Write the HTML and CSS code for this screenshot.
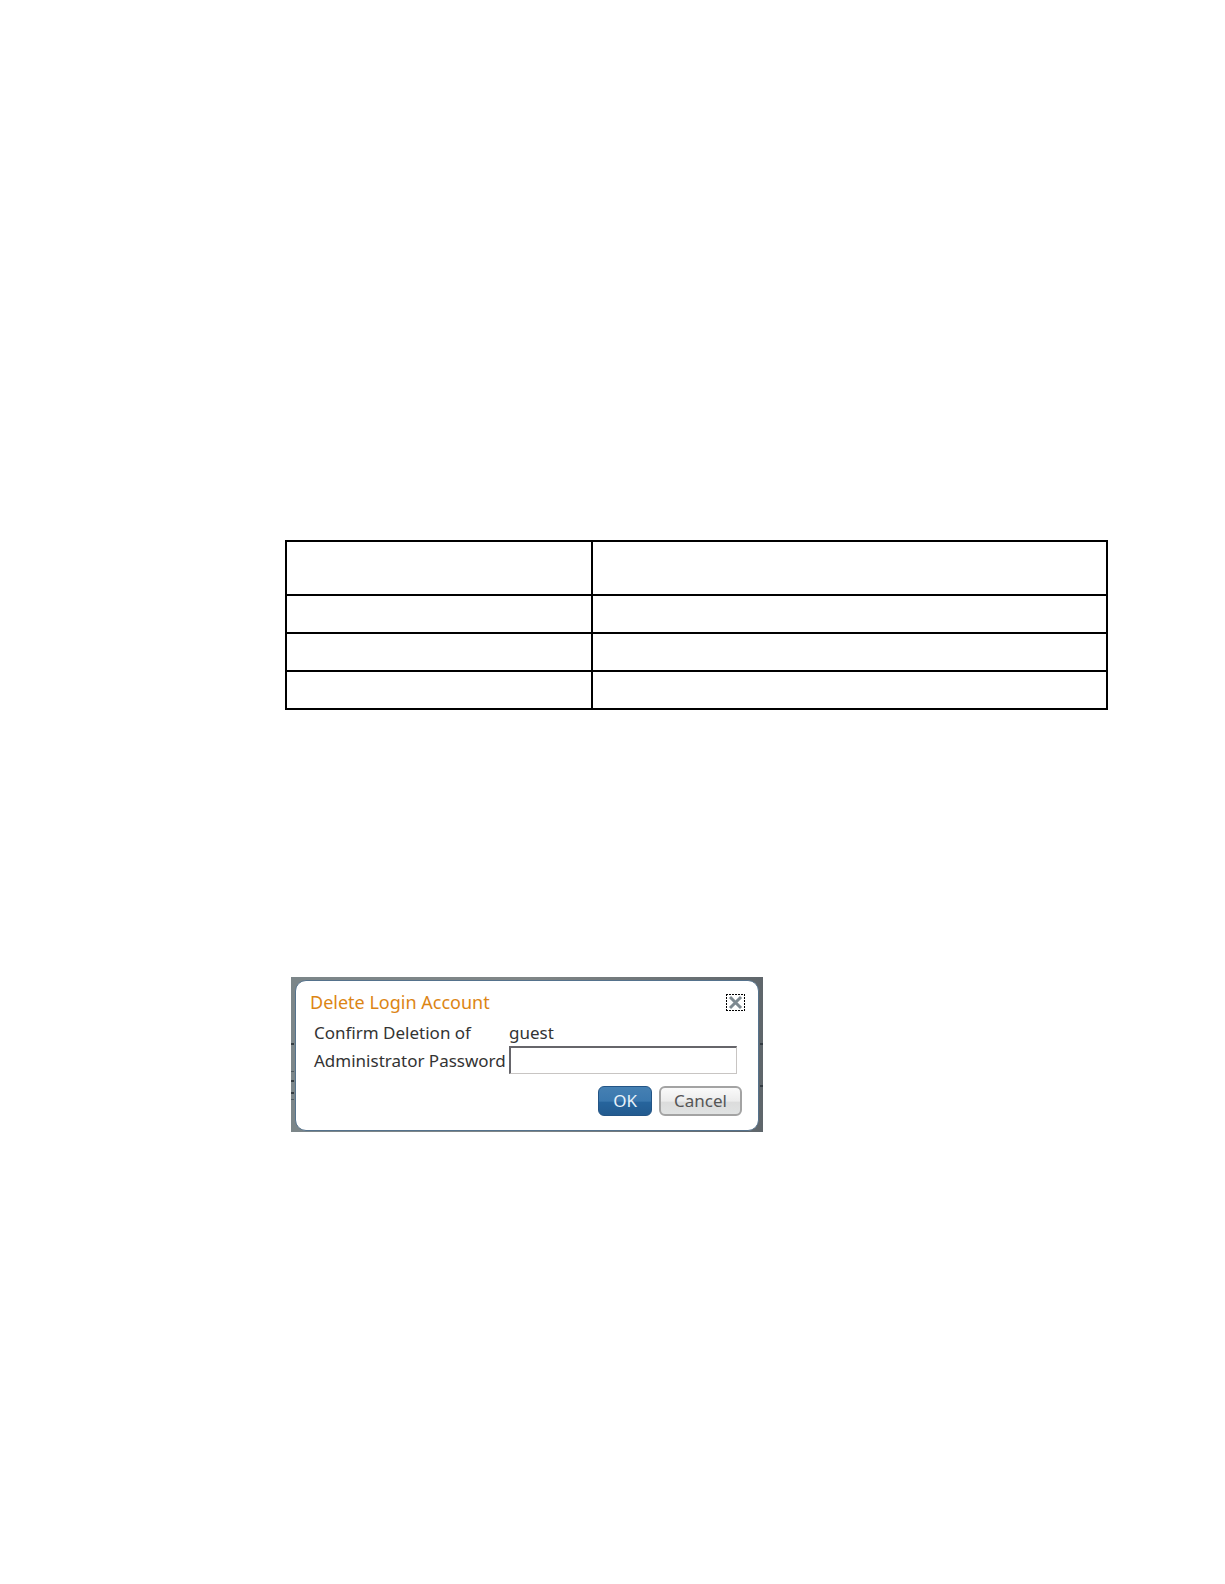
FILE: index.html
```
<!DOCTYPE html>
<html lang="en">
<head>
    <meta charset="UTF-8">
    <title>Delete Login Account</title>
    <link rel="stylesheet" href="styles.css">
</head>
<body>
    <table class="grid">
        <tr class="head"><td class="name"></td><td></td></tr>
        <tr><td></td><td></td></tr>
        <tr><td></td><td></td></tr>
        <tr><td></td><td></td></tr>
    </table>
    <div class="backdrop">
        <form class="dialog">
            <div class="title">
                <h1>Delete Login Account</h1>
                <button type="button" class="close" aria-label="Close">
                    <svg width="19" height="17" viewBox="0 0 19 17">
                        <path d="M4 3L15 14M15 3L4 14" stroke="#7d8990" stroke-width="3"/>
                        <path d="M0 .5H19M0 16.5H19M.5 0V17M18.5 0V17" stroke="#000" stroke-width="1" stroke-dasharray="2 1"/>
                    </svg>
                </button>
            </div>
            <div class="fields">
                <span>Confirm Deletion of</span>
                <span>guest</span>
                <label for="password">Administrator Password</label>
                <input type="password" id="password">
            </div>
            <div class="buttons">
                <button type="button" class="ok">OK</button>
                <button type="button" class="cancel">Cancel</button>
            </div>
        </form>
    </div>
</body>
</html>
```

FILE: styles.css
```
*{
    padding:0;
    margin:0;
    box-sizing:border-box;
}
body{
    padding:540px 117px 0 285px;
    background:#fff;
    color:#333;
    font-family:"Noto Sans",sans-serif;
    font-size:17px;
    line-height:28px;
}
.grid{
    width:100%;
    border-collapse:collapse;
    table-layout:fixed;
}
.grid td{
    height:38px;
    border:2px solid #000;
}
.grid .head td{
    height:54px;
}
.grid .name{
    width:306px;
}
/* dimmed page behind the dialog, with its row lines showing at the edges */
.backdrop{
    width:472px;
    margin:267px 0 0 6px;
    padding:3px 4px 1px;
    background:
        linear-gradient(#343c42,#343c42) 0 66px/3px 2px no-repeat,
        linear-gradient(#4d5960,#4d5960) 0 94px/3px 1px no-repeat,
        linear-gradient(#343c42,#343c42) 0 103px/3px 2px no-repeat,
        linear-gradient(#343c42,#343c42) 0 115px/3px 2px no-repeat,
        linear-gradient(#4d5960,#4d5960) 0 122px/3px 1px no-repeat,
        linear-gradient(#343c42,#343c42) 100% 66px/3px 2px no-repeat,
        linear-gradient(#343c42,#343c42) 100% 108px/3px 2px no-repeat,
        linear-gradient(90deg,#7c8689,#808687 50%,#5f666b);
}
.dialog{
    padding:7px 13px 14px 14px;
    background:#fff;
    border:1px solid #55728c;
    border-radius:11px;
}
.title{
    display:flex;
    justify-content:space-between;
    align-items:center;
}
.title h1{
    color:#dc8514;
    font-size:18px;
    font-weight:normal;
    line-height:28px;
}
.close{
    height:17px;
    border:0;
    background:none;
}
.close svg{
    display:block;
}
.fields{
    display:grid;
    grid-template-columns:195px 228px;
    align-items:end;
    padding:3px 0 0 4px;
    line-height:27px;
}
.fields input{
    height:28px;
    padding:0 4px;
    border:2px solid #66656a;
    border-right:1px solid #c8c5c3;
    border-bottom:1px solid #c8c5c3;
    font:inherit;
}
.buttons{
    display:flex;
    justify-content:flex-end;
    gap:7px;
    padding:12px 3px 0 0;
}
.buttons button{
    height:30px;
    padding:0 13px;
    border:1px solid #999;
    border-radius:6px;
    font:inherit;
    line-height:26px;
}
.buttons .ok{
    padding:0 14px;
    border-color:#235485;
    background:linear-gradient(#4580b3,#3b78ae 50%,#26649c 55%,#235b90);
    color:#e8f2fa;
}
.buttons .cancel{
    border:2px solid #a3a3a3;
    background:linear-gradient(#fafafa,#ececec 50%,#dcdcdc 55%,#e0e2e2);
    color:#555;
}
```
